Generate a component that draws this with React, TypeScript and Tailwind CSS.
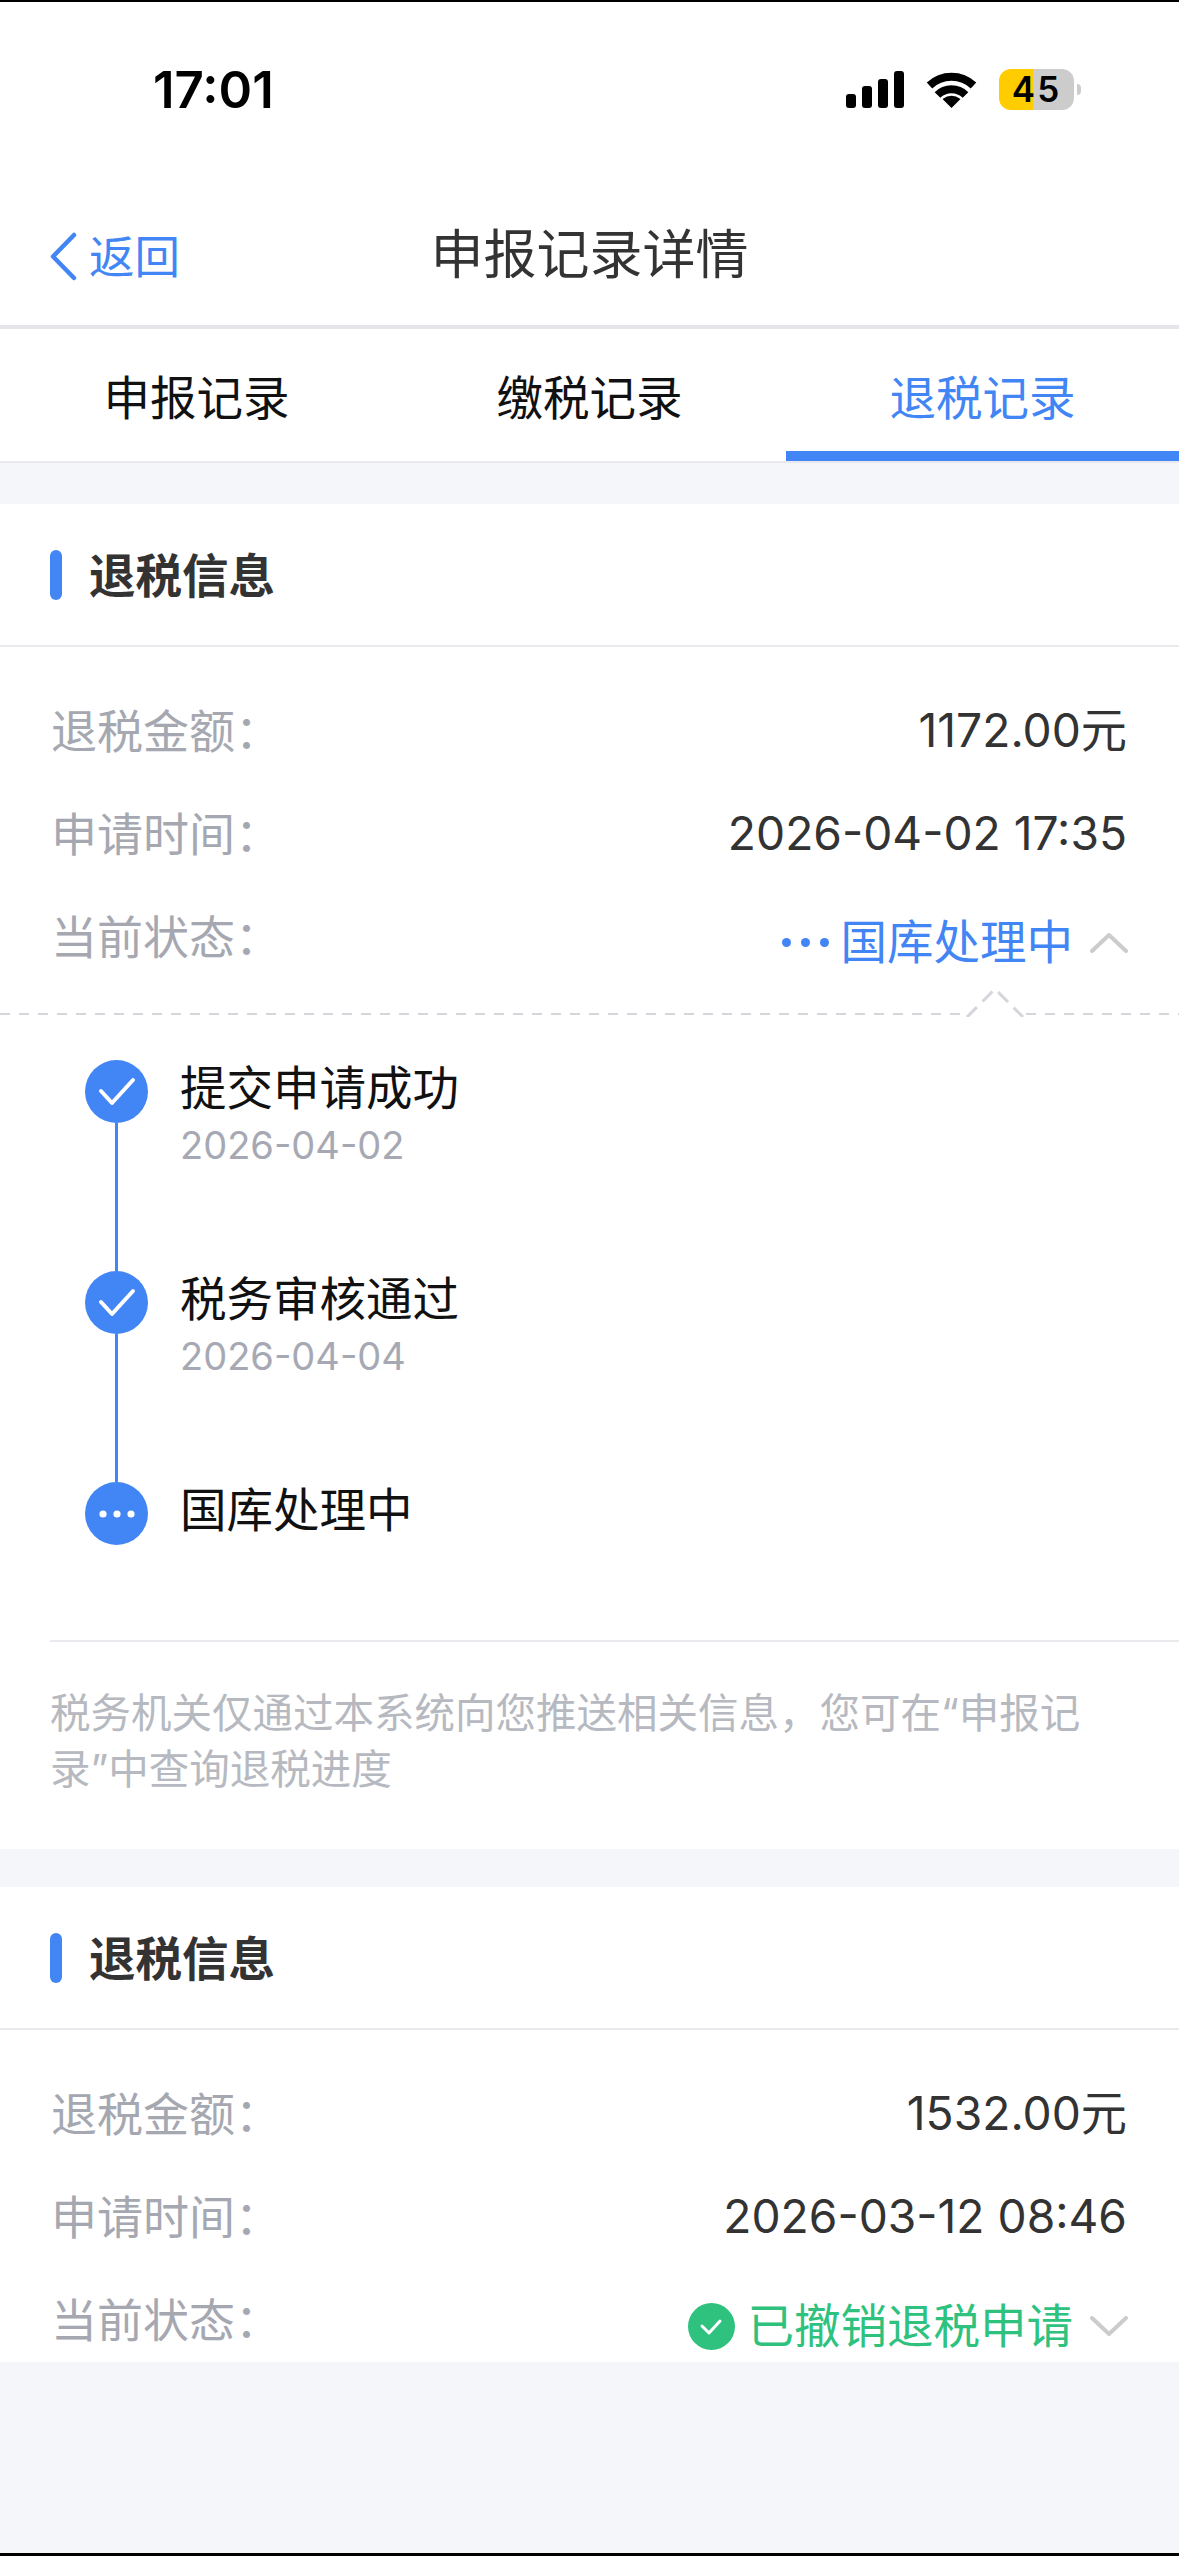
const BLUE = "#4285f4";

const SignalIcon = () => (
  <svg width="58" height="37" viewBox="0 0 58 37" fill="#000">
    <rect x="0" y="23" width="10" height="14" rx="3" />
    <rect x="16" y="15" width="10" height="22" rx="3" />
    <rect x="32" y="8" width="10" height="29" rx="3" />
    <rect x="48" y="0" width="10" height="37" rx="3" />
  </svg>
);

const WifiIcon = () => (
  <svg width="51" height="37" viewBox="0 0 51 37" fill="none" stroke="#000" strokeWidth="8">
    <path d="M3.5 14.5A32 32 0 0 1 47.5 14.5" />
    <path d="M11.5 24A20 20 0 0 1 39.5 24" />
    <path d="M25.5 37L16.5 28Q25.5 21.5 34.5 28Z" fill="#000" stroke="none" />
  </svg>
);

const StatusBar = () => (
  <div className="flex h-[174px] items-center justify-between pl-[153px] pr-[98px]">
    <span className="text-[51px] font-semibold leading-none text-black">17:01</span>
    <div className="flex items-center">
      <SignalIcon />
      <div className="ml-[22px]">
        <WifiIcon />
      </div>
      <div className="ml-[22px] flex h-[41px] w-[75px] items-center justify-center rounded-[12px] bg-[linear-gradient(90deg,#ffcc00_0_34px,#cccccc_34px)] text-[35px] font-semibold leading-none tracking-[2px] text-black">
        45
      </div>
      <div className="ml-[3px] h-[11px] w-[4px] rounded-r-full bg-[#cccccc]" />
    </div>
  </div>
);

const NavBar = () => (
  <div className="relative flex h-[149px] items-center justify-center pt-[10px]">
    <div className="absolute left-[49px] top-[56px] flex items-center">
      <svg width="28" height="49" viewBox="0 0 28 49" fill="none" stroke={BLUE} strokeWidth="4.5" strokeLinecap="round" strokeLinejoin="round">
        <path d="M25 3L4 24.5L25 46" />
      </svg>
      <span className="ml-[12px] pt-[2px] text-[45.5px] leading-none text-[#4285f4]">返回</span>
    </div>
    <h1 className="text-[53px] font-normal leading-none text-[#333333]">申报记录详情</h1>
  </div>
);

const Tabs = () => (
  <div className="flex h-[132px] bg-white">
    {["申报记录", "缴税记录", "退税记录"].map((tab, i) => (
      <div key={tab} className={`flex flex-1 items-center justify-center border-b-[10px] pt-[16px] text-[46.5px] leading-none ${i === 2 ? "border-[#4285f4] text-[#4285f4]" : "border-white text-[#111111]"}`}>
        {tab}
      </div>
    ))}
  </div>
);

const SectionTitle = () => (
  <div className="flex h-[143px] items-center border-b-2 border-[#e9eaee] pl-[50px]">
    <div className="h-[50px] w-[12px] rounded-full bg-[#4285f4]" />
    <span className="ml-[27px] pt-[4px] text-[46.5px] font-semibold leading-none text-[#333333]">退税信息</span>
  </div>
);

const InfoRow = ({ label, children }: { label: string; children: React.ReactNode }) => (
  <div className="flex h-[103px] items-center justify-between pl-[51px] pr-[52px]">
    <span className="text-[46px] leading-none text-[#a6a8b1]">{label}</span>
    {children}
  </div>
);

const Value = ({ text }: { text: string }) => (
  <span className="text-[46.2px] leading-none text-[#333333]">{text}</span>
);

const Chevron = ({ up }: { up?: boolean }) => (
  <svg className="-mr-[1px] ml-[17px]" width="38" height="21" viewBox="0 0 38 21" fill="none" stroke="#cccccc" strokeWidth="4" strokeLinecap="round" strokeLinejoin="round">
    <path d={up ? "M2 19L19 3L36 19" : "M2 2L19 18L36 2"} />
  </svg>
);

const TimelineItem = ({
  title,
  date,
  pending,
  last,
}: {
  title: string;
  date?: string;
  pending?: boolean;
  last?: boolean;
}) => (
  <div className={`flex ${last ? "h-[63px]" : "h-[211px]"}`}>
    <div className="flex w-[63px] flex-col items-center">
      <div className="flex h-[63px] w-[63px] shrink-0 items-center justify-center rounded-full bg-[#4285f4]">
        {pending ? (
          <svg width="36" height="8" viewBox="0 0 36 8" fill="#fff">
            <circle cx="4" cy="4" r="3.6" />
            <circle cx="18" cy="4" r="3.6" />
            <circle cx="32" cy="4" r="3.6" />
          </svg>
        ) : (
          <svg width="38" height="30" viewBox="0 0 38 30" fill="none" stroke="#fff" strokeWidth="4" strokeLinecap="round" strokeLinejoin="round">
            <path d="M3 14L14 26L35 3" />
          </svg>
        )}
      </div>
      {!last && <div className="w-[3px] flex-1 bg-[#4285f4]" />}
    </div>
    <div className="ml-[32px] -mt-[2px]">
      <div className="text-[46.5px] leading-[60px] text-[#111111]">{title}</div>
      {date && <div className="mt-[4px] text-[38px] leading-[46px] text-[#a6a9b3]">{date}</div>}
    </div>
  </div>
);

const App = () => {
  return (
    <div className="flex h-[2556px] w-[1179px] flex-col overflow-hidden bg-[#f4f6fa] font-['Inter','Noto_Sans_CJK_SC',sans-serif]">
      <div className="h-[2px] shrink-0 bg-black" />
      <div className="bg-white">
        <StatusBar />
        <NavBar />
      </div>
      <div className="h-[4px] shrink-0 bg-[#e5e6ea]" />
      <Tabs />
      <div className="h-[2px] shrink-0 bg-[#e8e9ed]" />

      <section className="mt-[41px] bg-white">
        <SectionTitle />
        <div className="pt-[32px]">
          <InfoRow label="退税金额：">
            <Value text="1172.00元" />
          </InfoRow>
          <InfoRow label="申请时间：">
            <Value text="2026-04-02 17:35" />
          </InfoRow>
          <InfoRow label="当前状态：">
            <div className="flex items-center pt-[12px]">
              <svg className="mr-[12px]" width="47" height="9" viewBox="0 0 47 9" fill={BLUE}>
                <circle cx="4.5" cy="4.5" r="4.5" />
                <circle cx="23.5" cy="4.5" r="4.5" />
                <circle cx="42.5" cy="4.5" r="4.5" />
              </svg>
              <span className="text-[46.5px] leading-none text-[#4285f4]">国库处理中</span>
              <Chevron up />
            </div>
          </InfoRow>
        </div>
        <div className="relative mt-[25px] h-[2px] bg-[repeating-linear-gradient(90deg,#d5d6dc_0_10px,transparent_10px_19px)]">
          <svg className="absolute bottom-[-2px] left-[964px] bg-white" width="62" height="30" viewBox="0 0 62 30" fill="none" stroke="#d5d6dc" strokeWidth="3" strokeDasharray="14 8">
            <path d="M3 30L31 2L59 30" />
          </svg>
        </div>
        <div className="pl-[85px] pt-[45px] pb-[95px]">
          <TimelineItem title="提交申请成功" date="2026-04-02" />
          <TimelineItem title="税务审核通过" date="2026-04-04" />
          <TimelineItem title="国库处理中" pending last />
        </div>
        <div className="ml-[50px] h-[2px] bg-[#e9eaee]" />
        <p className="pb-[51px] pl-[50px] pr-[60px] pt-[44px] text-[40.5px] leading-[56px] text-[#b6b9c0]">
          税务机关仅通过本系统向您推送相关信息，您可在“申报记录”中查询退税进度
        </p>
      </section>

      <section className="mt-[38px] h-[475px] overflow-hidden bg-white">
        <SectionTitle />
        <div className="pt-[32px]">
          <InfoRow label="退税金额：">
            <Value text="1532.00元" />
          </InfoRow>
          <InfoRow label="申请时间：">
            <Value text="2026-03-12 08:46" />
          </InfoRow>
          <InfoRow label="当前状态：">
            <div className="flex items-center pt-[14px]">
              <div className="mr-[13px] flex h-[47px] w-[47px] items-center justify-center rounded-full bg-[#2ec27e]">
                <svg width="24" height="18" viewBox="0 0 24 18" fill="none" stroke="#fff" strokeWidth="3" strokeLinecap="round" strokeLinejoin="round">
                  <path d="M3 8L10 15L21 3" />
                </svg>
              </div>
              <span className="text-[46.5px] leading-none text-[#2ec27e]">已撤销退税申请</span>
              <Chevron />
            </div>
          </InfoRow>
        </div>
      </section>

      <div className="flex-1" />
      <div className="h-[3px] shrink-0 bg-black" />
    </div>
  );
};

export default App;
